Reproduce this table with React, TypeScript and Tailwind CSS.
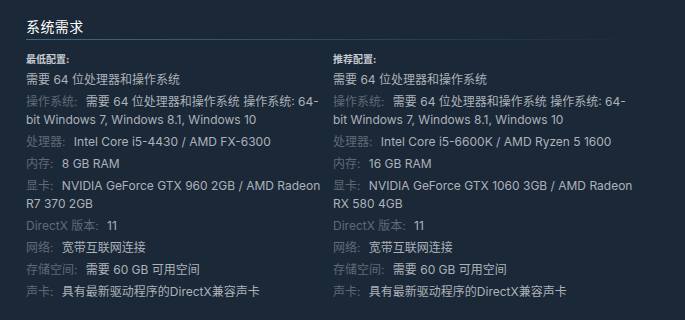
const font = { fontFamily: 'Inter, "Noto Sans CJK SC", sans-serif' }

type Row = { label?: string; value: string }

const minimum: Row[] = [
  { value: "需要 64 位处理器和操作系统" },
  { label: "操作系统:", value: "需要 64 位处理器和操作系统 操作系统: 64-bit Windows 7, Windows 8.1, Windows 10" },
  { label: "处理器:", value: "Intel Core i5-4430 / AMD FX-6300" },
  { label: "内存:", value: "8 GB RAM" },
  { label: "显卡:", value: "NVIDIA GeForce GTX 960 2GB / AMD Radeon R7 370 2GB" },
  { label: "DirectX 版本:", value: "11" },
  { label: "网络:", value: "宽带互联网连接" },
  { label: "存储空间:", value: "需要 60 GB 可用空间" },
  { label: "声卡:", value: "具有最新驱动程序的DirectX兼容声卡" },
]

const recommended: Row[] = [
  { value: "需要 64 位处理器和操作系统" },
  { label: "操作系统:", value: "需要 64 位处理器和操作系统 操作系统: 64-bit Windows 7, Windows 8.1, Windows 10" },
  { label: "处理器:", value: "Intel Core i5-6600K / AMD Ryzen 5 1600" },
  { label: "内存:", value: "16 GB RAM" },
  { label: "显卡:", value: "NVIDIA GeForce GTX 1060 3GB / AMD Radeon RX 580 4GB" },
  { label: "DirectX 版本:", value: "11" },
  { label: "网络:", value: "宽带互联网连接" },
  { label: "存储空间:", value: "需要 60 GB 可用空间" },
  { label: "声卡:", value: "具有最新驱动程序的DirectX兼容声卡" },
]

function ReqColumn({ title, rows, width }: { title: string; rows: Row[]; width: string }) {
  return (
    <div className={width}>
      <p className="text-[10px] font-bold text-[#c7ccd1] leading-[14px] mb-[5px]">{title}</p>
      <ul>
        {rows.map((row, i) => (
          <li key={i} className="text-[12px] leading-[18px] mb-[4px] text-[#acb2b8]">
            {row.label && <span className="text-[#5f6a75] mr-[5px]">{row.label}</span>}
            {row.label && " "}
            {row.value}
          </li>
        ))}
      </ul>
    </div>
  )
}

export default function App() {
  return (
    <div className="w-[685px] h-[320px] bg-[#1b2838] pt-[18px] pl-[26px]" style={font}>
      <div className="w-[616px]">
        <h2 className="text-[14px] leading-[18px] text-white pb-[3px] tracking-[0.03em]">系统需求</h2>
        <div className="h-px bg-gradient-to-r from-[#45687f] to-transparent" />
        <div className="flex gap-[11px] pt-[12px]">
          <ReqColumn title="最低配置:" rows={minimum} width="w-[296px]" />
          <ReqColumn title="推荐配置:" rows={recommended} width="w-[304px] shrink-0" />
        </div>
      </div>
    </div>
  )
}
